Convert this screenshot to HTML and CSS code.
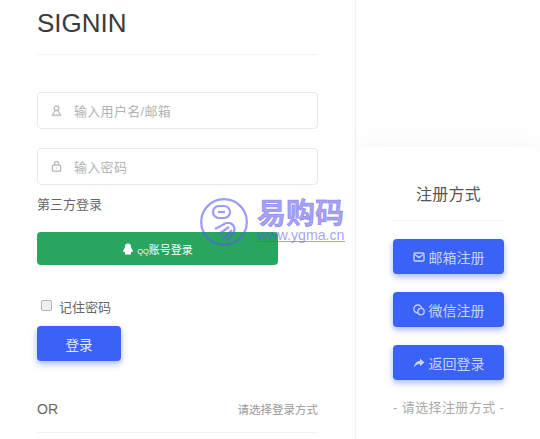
FILE: index.html
```html
<!DOCTYPE html>
<html lang="en">
<head>
    <meta charset="UTF-8">
    <meta name="viewport" content="width=device-width, initial-scale=1.0">
    <title>SIGNIN</title>
    <link rel="stylesheet" href="styles.css">
</head>
<body>
    <div class="page">
        <div class="signin">
            <h1 class="signin-title">SIGNIN</h1>
            <div class="field">
                <svg class="field-icon" viewBox="0 0 12 12"><circle cx="6" cy="3.6" r="2.6"/><path d="M4.4 6 L1.6 11 H10.4 L7.6 6"/></svg>
                <input class="field-input" type="text" placeholder="输入用户名/邮箱">
            </div>
            <div class="field">
                <svg class="field-icon" viewBox="0 0 12 12"><rect x="1.5" y="4.5" width="9" height="6.5" rx="1"/><path d="M3.8 4.5 V2.8 a2.2 2.2 0 0 1 4.4 0 V4.5 M6 7 V8.2"/></svg>
                <input class="field-input" type="text" placeholder="输入密码">
            </div>
            <div class="third-label">第三方登录</div>
            <button class="qq-btn">
                <svg class="qq-icon" viewBox="0 0 12 12"><path d="M6 .6 C3.8 .6 2.9 2.4 2.9 4 C2.9 4.8 2.2 5.6 1.6 6.8 C1 8 1 9 1.5 9.2 C1.8 9.3 2.2 8.8 2.5 8.4 C2.7 9.2 3 9.8 3.4 10.2 C2.6 10.5 2.4 11.4 3.6 11.4 H8.4 C9.6 11.4 9.4 10.5 8.6 10.2 C9 9.8 9.3 9.2 9.5 8.4 C9.8 8.8 10.2 9.3 10.5 9.2 C11 9 11 8 10.4 6.8 C9.8 5.6 9.1 4.8 9.1 4 C9.1 2.4 8.2 .6 6 .6 Z"/></svg>
                <span><span class="qq-small">QQ</span>账号登录</span>
            </button>
            <label class="remember"><input class="remember-box" type="checkbox"> 记住密码</label>
            <button class="primary-btn login-btn">登录</button>
            <div class="or-row">
                <span class="or-text">OR</span>
                <span class="or-hint">请选择登录方式</span>
            </div>
        </div>

        <div class="side">
            <div class="register">
                <div class="register-title">注册方式</div>
                <button class="primary-btn reg-btn">
                    <svg class="reg-icon" viewBox="0 0 12 12"><rect x="1" y="2" width="10" height="8" rx="1"/><path d="M1.5 3.2 L6 6.6 L10.5 3.2"/></svg>
                    邮箱注册
                </button>
                <button class="primary-btn reg-btn">
                    <svg class="reg-icon" viewBox="0 0 12 12"><circle cx="4.8" cy="5" r="4"/><circle cx="8" cy="7.6" r="3.2" class="reg-icon-fill"/><path d="M6.8 7 h.1 M9.1 7 h.1"/></svg>
                    微信注册
                </button>
                <button class="primary-btn reg-btn">
                    <svg class="reg-icon reg-icon-solid" viewBox="0 0 12 12"><path d="M7 1.6 L11.4 5.4 L7 9.2 V7 C4.6 7 2.8 7.8 1 10.4 C1.4 7 3.4 4.2 7 3.8 Z"/></svg>
                    返回登录
                </button>
                <div class="register-hint">- 请选择注册方式 -</div>
            </div>
        </div>
    </div>

    <div class="watermark">
        <svg class="watermark-logo" viewBox="0 0 48 48">
            <circle cx="24" cy="24" r="22.8"/>
            <rect x="13" y="8" width="17" height="12" rx="6"/>
            <path d="M18 14 H25"/>
            <path d="M15 31 L26 25 H30 C35 27 36 32 32 37 L27 43 M19 36 L29 29 M23 41 L32 32"/>
        </svg>
        <div class="watermark-text">
            <div class="watermark-name">易购码</div>
            <div class="watermark-url">www.ygma.cn</div>
        </div>
    </div>
</body>
</html>
```

FILE: styles.css
```css
* {
    box-sizing: border-box;
}

html, body {
    height: 100%;
    margin: 0;
    overflow: hidden;
}

body {
    font-family: "Liberation Sans", "Noto Sans CJK SC", sans-serif;
    color: #555;
    background-color: #fff;
}

.page {
    display: flex;
    height: 439px;
}

.signin {
    width: 356px;
    height: 439px;
    padding: 0 37px;
    border-right: 1px solid #f1f1f1;
    overflow: hidden;
}

.signin-title {
    margin: 0 0 37px;
    padding: 7px 0 15px;
    height: 55px;
    font-size: 26px;
    line-height: 32px;
    font-weight: 400;
    color: #3b3b3b;
    border-bottom: 1px solid #f3f3f3;
}

.field {
    display: flex;
    align-items: center;
    height: 37px;
    margin-bottom: 19px;
    padding-left: 13px;
    background-color: #fff;
    border: 1px solid #e8e8e8;
    border-radius: 4px;
}

.field-icon {
    width: 11px;
    height: 11px;
    fill: none;
    stroke: #b4b4b4;
    stroke-width: 1.3;
}

.field-input {
    flex: 1;
    min-width: 0;
    margin-left: 12px;
    padding: 2px 0 0;
    border: none;
    outline: none;
    font-family: inherit;
    font-size: 13px;
    letter-spacing: 0.3px;
}

.field-input::placeholder {
    color: #b3b3b3;
}

.third-label {
    margin-top: -9px;
    height: 28px;
    font-size: 13px;
    line-height: 20px;
    color: #666;
}

.qq-btn {
    display: flex;
    align-items: center;
    justify-content: center;
    gap: 3px;
    width: 241px;
    height: 33px;
    padding: 0;
    margin-top: 9px;
    border: none;
    border-radius: 4px;
    font-family: inherit;
    font-size: 11px;
    color: #fff;
    background-color: #28a55f;
}

.qq-small {
    font-size: 7.5px;
}

.qq-icon {
    width: 12px;
    height: 12px;
    fill: #fff;
}

.remember {
    display: flex;
    align-items: center;
    gap: 7px;
    height: 20px;
    margin-top: 31px;
    padding-left: 4px;
    font-size: 13px;
    color: #666;
}

.remember-box {
    appearance: none;
    width: 11px;
    height: 11px;
    margin: -1px 0 0;
    background-color: #efefef;
    border: 1px solid #b5b5b5;
    border-radius: 2px;
}

.primary-btn {
    border: none;
    border-radius: 4px;
    font-family: inherit;
    color: #e6ebff;
    background-color: #3b62f6;
    box-shadow: 0 3px 6px rgba(59, 98, 246, 0.45);
}

.login-btn {
    display: block;
    width: 84px;
    height: 35px;
    margin-top: 10px;
    font-size: 13.5px;
}

.or-row {
    display: flex;
    justify-content: space-between;
    align-items: center;
    height: 72px;
    padding-top: 24px;
    border-bottom: 1px solid #f3f3f3;
}

.or-text {
    font-size: 14px;
    color: #666;
}

.or-hint {
    font-size: 11.5px;
    color: #999;
}

.side {
    flex: 1;
    padding-top: 147px;
    overflow: hidden;
}

.register {
    height: 292px;
    padding: 37px 36px 0 37px;
    background-color: #fff;
    border-radius: 10px 10px 0 0;
    box-shadow: 0 0 30px rgba(0, 0, 0, 0.05);
}

.register-title {
    height: 37px;
    margin-bottom: 18px;
    font-size: 16px;
    line-height: 22px;
    letter-spacing: 0.3px;
    text-align: center;
    color: #555;
    border-bottom: 1px solid #f1f1f1;
}

.reg-btn {
    display: flex;
    align-items: center;
    justify-content: center;
    gap: 4px;
    width: 111px;
    height: 35px;
    margin-bottom: 18px;
    padding: 0;
    font-size: 14px;
    color: #c8d3fc;
}

.reg-icon {
    width: 12px;
    height: 12px;
    fill: none;
    stroke: #c8d3fc;
    stroke-width: 1.3;
}

.reg-icon-fill {
    fill: #3b62f6;
}

.reg-icon-solid {
    fill: #c8d3fc;
    stroke: none;
}

.register-hint {
    margin-top: 1px;
    font-size: 13px;
    line-height: 20px;
    letter-spacing: 0.4px;
    text-align: center;
    color: #aaa;
    white-space: nowrap;
}

/* site stamp laid over the form */
.watermark {
    position: absolute;
    left: 200px;
    top: 198px;
    display: flex;
    gap: 9px;
    pointer-events: none;
}

.watermark-logo {
    width: 48px;
    height: 48px;
    fill: none;
    stroke: rgba(90, 90, 240, 0.6);
    stroke-width: 2.2;
}

.watermark-text {
    width: 88px;
    margin-top: 2px;
}

.watermark-name {
    font-size: 29px;
    line-height: 29px;
    font-weight: 700;
    white-space: nowrap;
    color: rgba(90, 80, 235, 0.55);
    -webkit-text-stroke: 0.6px rgba(90, 80, 235, 0.55);
}

.watermark-url {
    font-size: 14.2px;
    line-height: 12px;
    white-space: nowrap;
    color: rgba(90, 80, 235, 0.55);
    border-bottom: 1px solid rgba(90, 80, 235, 0.55);
}
```
